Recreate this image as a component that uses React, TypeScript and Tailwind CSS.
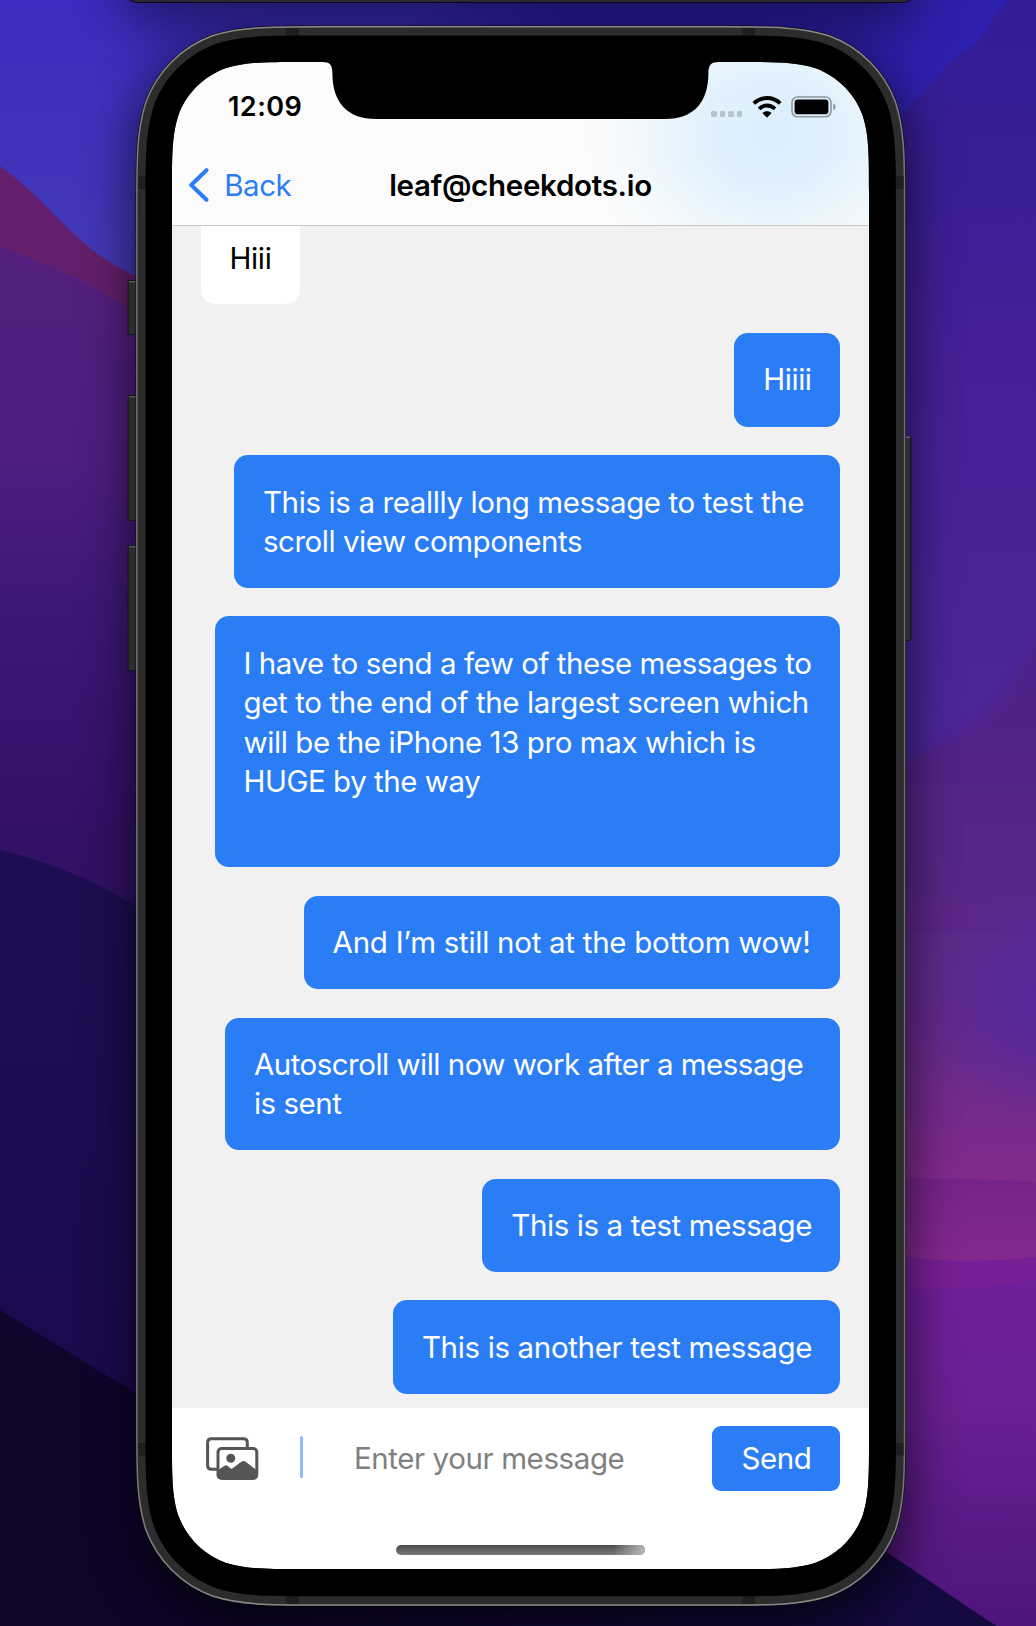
import React from "react";

type Line = { text: string; tracking: string };
type Message = { box: string; lines: Line[] };

const messages: Message[] = [
  { box: "h-[94px] w-[106px] pt-[27.8px]", lines: [{ text: "Hiiii", tracking: "tracking-[-0.45px]" }] },
  {
    box: "mt-[28.4px] h-[132.8px] w-[606.4px] pt-[28.1px]",
    lines: [
      { text: "This is a reallly long message to test the", tracking: "tracking-[-0.38px]" },
      { text: "scroll view components", tracking: "tracking-[-0.46px]" },
    ],
  },
  {
    box: "mt-[28.3px] h-[250.8px] w-[625.8px] pt-[28.1px]",
    lines: [
      { text: "I have to send a few of these messages to", tracking: "tracking-[-0.45px]" },
      { text: "get to the end of the largest screen which", tracking: "tracking-[-0.37px]" },
      { text: "will be the iPhone 13 pro max which is", tracking: "tracking-[-0.42px]" },
      { text: "HUGE by the way", tracking: "tracking-[-0.46px]" },
    ],
  },
  {
    box: "mt-[28.8px] h-[93.3px] w-[536.7px] pt-[27.2px]",
    lines: [{ text: "And I’m still not at the bottom wow!", tracking: "tracking-[-0.27px]" }],
  },
  {
    box: "mt-[28.5px] h-[132.9px] w-[615.4px] pt-[27.2px]",
    lines: [
      { text: "Autoscroll will now work after a message", tracking: "tracking-[-0.51px]" },
      { text: "is sent", tracking: "tracking-[-0.48px]" },
    ],
  },
  {
    box: "mt-[28.1px] h-[93.5px] w-[358px] pt-[27.3px]",
    lines: [{ text: "This is a test message", tracking: "tracking-[-0.4px]" }],
  },
  {
    box: "mt-[28.3px] h-[93.8px] w-[447.4px] pt-[27.5px]",
    lines: [{ text: "This is another test message", tracking: "tracking-[-0.35px]" }],
  },
];

/** Rectangle with continuous-curvature corners. */
function smoothRect(x: number, y: number, x2: number, y2: number, r: number) {
  const a = 1.52866 * r;
  const b = 1.08849 * r;
  const c = 0.86841 * r;
  const d = 0.63149 * r;
  const e = 0.07491 * r;
  const f = 0.37282 * r;
  const g = 0.16906 * r;
  return [
    `M${x + a} ${y}H${x2 - a}`,
    `C${x2 - b} ${y} ${x2 - c} ${y} ${x2 - d} ${y + e}`,
    `C${x2 - f} ${y + g} ${x2 - g} ${y + f} ${x2 - e} ${y + d}`,
    `C${x2} ${y + c} ${x2} ${y + b} ${x2} ${y + a}V${y2 - a}`,
    `C${x2} ${y2 - b} ${x2} ${y2 - c} ${x2 - e} ${y2 - d}`,
    `C${x2 - g} ${y2 - f} ${x2 - f} ${y2 - g} ${x2 - d} ${y2 - e}`,
    `C${x2 - c} ${y2} ${x2 - b} ${y2} ${x2 - a} ${y2}H${x + a}`,
    `C${x + b} ${y2} ${x + c} ${y2} ${x + d} ${y2 - e}`,
    `C${x + f} ${y2 - g} ${x + g} ${y2 - f} ${x + e} ${y2 - d}`,
    `C${x} ${y2 - c} ${x} ${y2 - b} ${x} ${y2 - a}V${y + a}`,
    `C${x} ${y + b} ${x} ${y + c} ${x + e} ${y + d}`,
    `C${x + g} ${y + f} ${x + f} ${y + g} ${x + d} ${y + e}`,
    `C${x + c} ${y} ${x + b} ${y} ${x + a} ${y}Z`,
  ].join("");
}

const OUTER = smoothRect(136, 26, 905.4, 1605.8, 120.6);
const RIM = smoothRect(136.8, 26.8, 904.6, 1605, 119.9);
const GLASS = smoothRect(145.5, 35.6, 896, 1596.2, 111);
const SCREEN = smoothRect(172, 62, 869, 1569, 84.6);

function Wallpaper() {
  return (
    <svg className="absolute inset-0" width="1036" height="1626" viewBox="0 0 1036 1626" aria-hidden="true">
      <defs>
        <linearGradient id="wBlue" x1="0" y1="0" x2="0" y2="280" gradientUnits="userSpaceOnUse">
          <stop offset="0" stopColor="#3a2cc0" />
          <stop offset="1" stopColor="#4439b6" />
        </linearGradient>
        <linearGradient id="wTop" x1="400" y1="0" x2="560" y2="0" gradientUnits="userSpaceOnUse">
          <stop offset="0" stopColor="#2e20ae" stopOpacity="0" />
          <stop offset="1" stopColor="#2e20ae" />
        </linearGradient>
        <linearGradient id="wPurple" x1="0" y1="250" x2="0" y2="860" gradientUnits="userSpaceOnUse">
          <stop offset="0" stopColor="#54207e" />
          <stop offset="0.35" stopColor="#4d1d80" />
          <stop offset="0.6" stopColor="#3c1776" />
          <stop offset="1" stopColor="#311066" />
        </linearGradient>
        <linearGradient id="wNavy" x1="0" y1="850" x2="0" y2="1380" gradientUnits="userSpaceOnUse">
          <stop offset="0" stopColor="#1d0e52" />
          <stop offset="1" stopColor="#1c094e" />
        </linearGradient>
        <linearGradient id="wRight" x1="0" y1="50" x2="0" y2="720" gradientUnits="userSpaceOnUse">
          <stop offset="0" stopColor="#341c96" />
          <stop offset="0.5" stopColor="#452096" />
          <stop offset="1" stopColor="#4b2699" />
        </linearGradient>
        <linearGradient id="wMauve" x1="0" y1="640" x2="0" y2="1190" gradientUnits="userSpaceOnUse">
          <stop offset="0" stopColor="#4c2088" />
          <stop offset="0.45" stopColor="#592888" />
          <stop offset="0.7" stopColor="#642a8c" />
          <stop offset="1" stopColor="#832b8c" />
        </linearGradient>
        <radialGradient id="wGlowBlue" cx="1046" cy="1000" r="120" gradientUnits="userSpaceOnUse">
          <stop offset="0" stopColor="#55289a" />
          <stop offset="1" stopColor="#55289a" stopOpacity="0" />
        </radialGradient>
        <linearGradient id="wMagenta" x1="0" y1="1178" x2="0" y2="1262" gradientUnits="userSpaceOnUse">
          <stop offset="0" stopColor="#752489" />
          <stop offset="1" stopColor="#84288f" />
        </linearGradient>
        <linearGradient id="wViolet" x1="0" y1="1285" x2="0" y2="1626" gradientUnits="userSpaceOnUse">
          <stop offset="0" stopColor="#6f1f99" />
          <stop offset="0.35" stopColor="#6a2092" />
          <stop offset="1" stopColor="#4d157c" />
        </linearGradient>
        <linearGradient id="wFloor" x1="250" y1="0" x2="900" y2="0" gradientUnits="userSpaceOnUse">
          <stop offset="0" stopColor="#0f042c" />
          <stop offset="1" stopColor="#150942" />
        </linearGradient>
        <filter id="wShade" x="-200" y="-200" width="1436" height="2026" filterUnits="userSpaceOnUse">
          <feGaussianBlur stdDeviation="27" />
        </filter>
        <filter id="wEdge" x="-10%" y="-10%" width="120%" height="120%">
          <feGaussianBlur stdDeviation="4" />
        </filter>
      </defs>
      <rect width="1036" height="420" fill="url(#wBlue)" />
      <rect x="400" width="636" height="420" fill="url(#wTop)" />
      <path d="M0 166C55 206 70 245 137 277L160 286V420H0Z" fill="#641f6c" />
      <path d="M0 247C60 268 100 287 160 330V950H0Z" fill="url(#wPurple)" />
      <path d="M0 850C50 862 95 880 137 907L160 922V1440H0Z" fill="url(#wNavy)" />
      <path d="M1008 0C990 20 985 35 976 43C950 58 935 80 909 107L860 160V1200H1036V0Z" fill="url(#wRight)" />
      <path d="M1056 600C1010 700 980 735 860 780V1210H1056Z" fill="url(#wMauve)" filter="url(#wEdge)" />
      <rect x="900" y="860" width="136" height="300" fill="url(#wGlowBlue)" />
      <path d="M860 1182C930 1176 980 1179 1036 1182V1300H860Z" fill="url(#wMagenta)" />
      <path d="M860 1248C930 1265 980 1262 1036 1257V1400H860Z" fill="#772096" />
      <path d="M860 1288C930 1292 980 1288 1036 1280V1626H860Z" fill="url(#wViolet)" />
      <path d="M0 1310L137 1394L500 1500L800 1500L888 1553C935 1584 965 1606 997 1626H0Z" fill="url(#wFloor)" />
      <path d={smoothRect(136, 45, 905, 1626, 110)} fill="#000" opacity="0.7" filter="url(#wShade)" />
      <rect x="125" y="-100" width="790" height="126" rx="18" fill="#000" opacity="0.45" filter="url(#wShade)" />
      <rect x="125" y="-40" width="790" height="43" rx="12" fill="#09070f" />
      <rect x="126" y="-40" width="788" height="42" rx="11" fill="#2b2937" />
    </svg>
  );
}

function PhoneFrame() {
  return (
    <svg
      className="pointer-events-none absolute inset-0"
      width="1036"
      height="1626"
      viewBox="0 0 1036 1626"
      aria-hidden="true"
    >
      <defs>
        <linearGradient id="fRim" x1="0" y1="26" x2="0" y2="1606" gradientUnits="userSpaceOnUse">
          <stop offset="0" stopColor="#8a8a8a" />
          <stop offset="0.12" stopColor="#707070" />
          <stop offset="0.9" stopColor="#707070" />
          <stop offset="1" stopColor="#8a8a8a" />
        </linearGradient>
      </defs>
      {[
        [280, 55],
        [395, 126],
        [545, 126],
      ].map(([y, h]) => (
        <g key={y}>
          <rect x="127.6" y={y} width="12" height={h} rx="2" fill="#151515" />
          <rect x="128.6" y={y + 1} width="10" height={h - 2} rx="1.5" fill="#2d2d2d" />
          <rect x="129" y={y + 1} width="8" height="1.4" fill="#5a5a5a" />
        </g>
      ))}
      <rect x="902" y="436" width="9.4" height="205" rx="2" fill="#151515" />
      <rect x="902" y="437" width="8.2" height="203" rx="1.5" fill="#2d2d2d" />
      <rect x="905" y="436.5" width="5" height="1.4" fill="#666" />
      <path d={OUTER + SCREEN} fillRule="evenodd" fill="#2c2c2c" />
      <path d={OUTER} fill="none" stroke="#0b0b10" strokeWidth="1" />
      <path d={RIM} fill="none" stroke="url(#fRim)" strokeWidth="1.5" />
      <g fill="#1f1f1f">
        <rect x="286" y="28" width="13" height="8" />
        <rect x="742" y="28" width="13" height="8" />
        <rect x="286" y="1596" width="13" height="8" />
        <rect x="742" y="1596" width="13" height="8" />
        <rect x="138.5" y="176" width="8" height="13" />
        <rect x="896" y="176" width="7.5" height="13" />
        <rect x="138.5" y="1443" width="8" height="12.5" />
        <rect x="896" y="1443" width="7.5" height="12.5" />
      </g>
      <path d={GLASS + SCREEN} fillRule="evenodd" fill="#000" />
      <path
        d="M322 60V62C330 62 332.4 65 332.4 73C332.4 102 347 119 376 119H665C694 119 708.4 102 708.4 73C708.4 65 711 62 719 62V60Z"
        fill="#000"
      />
    </svg>
  );
}

function WifiIcon() {
  return (
    <svg width="30" height="22" viewBox="0 0 30 22" fill="none" stroke="#000" strokeWidth="3.9">
      <path d="M1.8 7.4C9.3 .2 20.7 .2 28.2 7.4" />
      <path d="M7 12.8C11.6 8.4 18.4 8.4 23 12.8" />
      <path d="M15 21.7L10.4 17.1C13 14.7 17 14.7 19.6 17.1Z" fill="#000" stroke="none" />
    </svg>
  );
}

function BatteryIcon() {
  return (
    <svg width="46" height="22" viewBox="0 0 46 22">
      <rect x="1" y="1" width="39" height="19.8" rx="5.5" fill="none" stroke="#8c979f" strokeWidth="1.6" />
      <rect x="3.6" y="3.6" width="33.8" height="14.6" rx="3" fill="#000" />
      <path d="M42.3 7.6C45.4 8.8 45.4 13 42.3 14.2Z" fill="#8c979f" />
    </svg>
  );
}

function PhotosIcon() {
  return (
    <svg width="54" height="44" viewBox="0 0 54 44" fill="none" stroke="#555" strokeWidth="3">
      <path d="M12 32.2H6.6C4.1 32.2 2.6 30.8 2.6 28.4V5.6C2.6 3.2 4.1 1.8 6.6 1.8H38.4C40.9 1.8 42.3 3.2 42.3 5.6V10.5" />
      <rect x="13" y="11.4" width="38.8" height="30.2" rx="3.6" />
      <circle cx="25.8" cy="21.3" r="4.5" fill="#555" stroke="none" />
      <path
        d="M13 33.2L19.4 28.8C20.6 28 21.4 28 22.4 28.8L26.6 32L36 25C37.8 23.7 39.3 23.7 41 25L52 33.6V38C52 40.5 50.6 41.6 48.4 41.6H16.2C14 41.6 13 40.5 13 38Z"
        fill="#555"
        stroke="none"
      />
    </svg>
  );
}

function Header() {
  return (
    <header className="flex h-[163.5px] shrink-0 flex-col border-b border-[#c6c7c8] bg-[#fbfbfb] bg-[radial-gradient(ellipse_185px_155px_at_600px_72px,#dbeefc_0%,#e0f1fc_35%,#eff7fc_68%,#f7fafc_85%,#fbfbfb_100%)]">
      <div className="flex h-[84px] items-center justify-between pt-[5px] pr-[32px] pl-[56px]">
        <span className="pt-[2px] text-[27px] font-semibold tracking-[0.45px]">12:09</span>
        <div className="flex items-center">
          <div className="flex gap-[3px] pt-[15px] pr-[10px]">
            <i className="size-[5.4px] rounded-[1.5px] bg-[#b4c3cd]" />
            <i className="size-[5.4px] rounded-[1.5px] bg-[#b4c3cd]" />
            <i className="size-[5.4px] rounded-[1.5px] bg-[#b4c3cd]" />
            <i className="size-[5.4px] rounded-[1.5px] bg-[#b4c3cd]" />
          </div>
          <WifiIcon />
          <div className="pl-[9px]">
            <BatteryIcon />
          </div>
        </div>
      </div>
      <nav className="grid h-[78px] grid-cols-[1fr_auto_1fr] items-center pl-[16px]">
        <button className="flex items-center gap-[15.3px] text-[29.5px] font-[370] tracking-[-0.5px] text-[#2b7df6]">
          <svg width="21" height="35" viewBox="0 0 21 35" fill="none" stroke="#2b7df6" strokeWidth="4" strokeLinecap="round" strokeLinejoin="round">
            <path d="M18.5 2.2L3.2 17L18.5 31.8" />
          </svg>
          Back
        </button>
        <h1 className="-ml-[16px] text-[29.5px] font-semibold tracking-[-0.28px]">leaf@cheekdots.io</h1>
      </nav>
    </header>
  );
}

function Bubble({ box, lines }: Message) {
  return (
    <div className={`shrink-0 self-end rounded-[14px] bg-[#2b7df6] px-[28.9px] text-white ${box}`}>
      {lines.map((line) => (
        <p
          key={line.text}
          className={`text-[29.5px] leading-[39.2px] font-[370] whitespace-nowrap ${line.tracking}`}
        >
          {line.text}
        </p>
      ))}
    </div>
  );
}

export default function App() {
  return (
    <div className="relative h-[1626px] w-[1036px] overflow-hidden bg-[#1c1058] font-['Inter',sans-serif] text-black">
      <Wallpaper />
      <div className="relative pt-[62px] pl-[172px]">
        <div className="flex h-[1507px] w-[697px] flex-col overflow-hidden rounded-[60px] bg-white">
          <Header />
          <main className="flex h-[1182.8px] shrink-0 flex-col bg-[#f1f1f1] pr-[28.6px] pl-[28.5px]">
            <div className="mb-[28.6px] h-[78.6px] w-[99.7px] shrink-0 rounded-b-[14px] bg-white pt-[13.6px] pl-[28.9px] text-[29.5px] leading-[39.2px] font-[370] tracking-[-0.3px]">
              Hiii
            </div>
            {messages.map((m) => (
              <Bubble key={m.lines[0].text} {...m} />
            ))}
          </main>
          <footer className="flex flex-1 flex-col">
            <div className="flex items-center pt-[17.8px] pr-[28.6px] pl-[32.5px]">
              <PhotosIcon />
              <i className="-mt-[4px] ml-[41px] h-[42px] w-[3.8px] rounded-[1.5px] bg-[#8abcff]" />
              <span className="-mt-px ml-[50.6px] flex-1 text-[29.5px] font-[370] tracking-[-0.4px] text-[#808080]">
                Enter your message
              </span>
              <button className="h-[65px] w-[128px] rounded-[9px] bg-[#2b7df6] pb-px text-[29.5px] font-[370] tracking-[-0.4px] text-white">
                Send
              </button>
            </div>
            <div className="mt-[54.4px] flex h-[9.4px] w-[248.5px] self-center overflow-hidden rounded-full bg-linear-to-b from-[#4a4a4a] to-[#7c7c7c]">
              <div className="ml-auto w-[32px] bg-linear-to-r from-[#b8b8b8]/0 to-[#b8b8b8]" />
            </div>
          </footer>
        </div>
      </div>
      <PhoneFrame />
    </div>
  );
}
